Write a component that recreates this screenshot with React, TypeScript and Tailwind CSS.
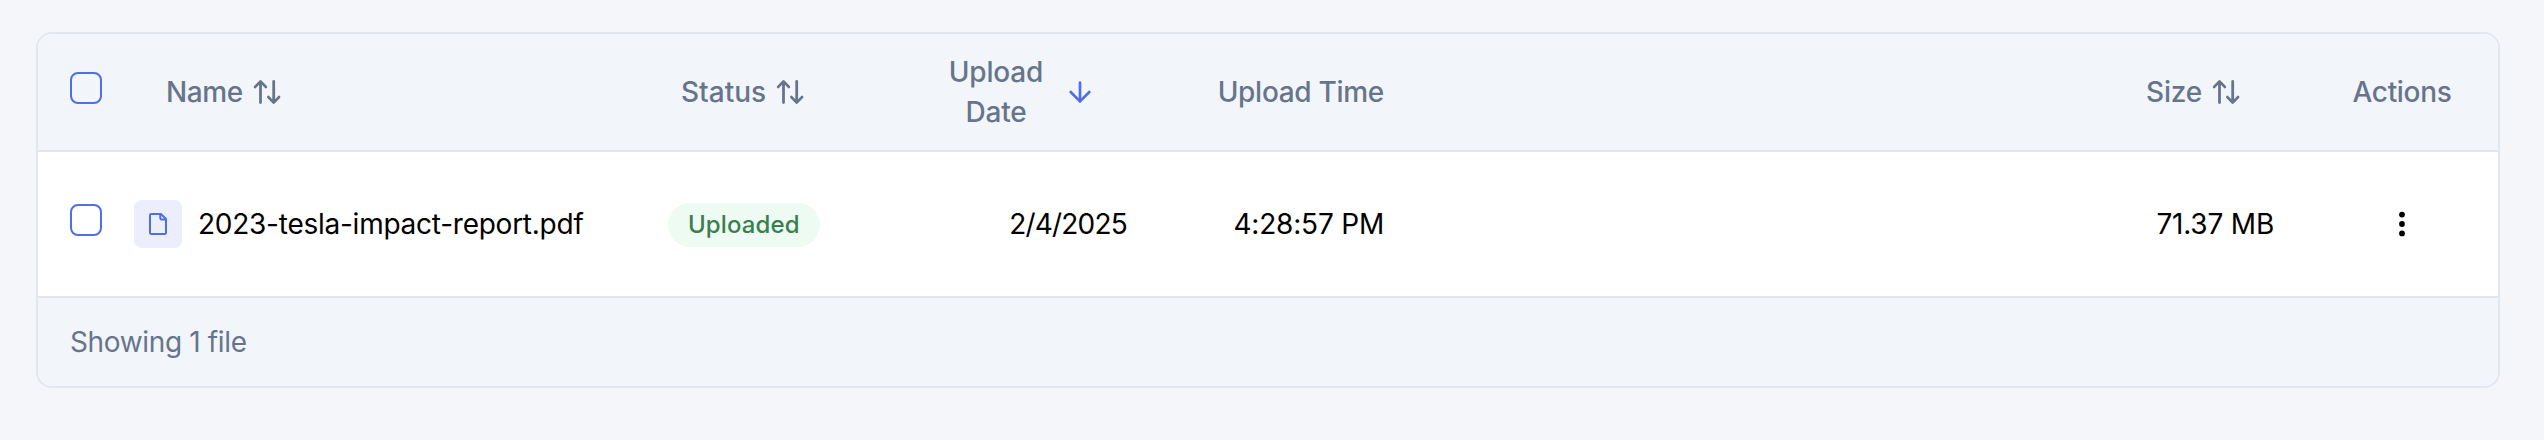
import React from "react";
import { ArrowDown } from "lucide-react";

function Checkbox() {
  return (
    <span
      role="checkbox"
      aria-checked="false"
      className="mb-2 size-8 shrink-0 rounded-lg border-2 border-[#4f6ee8]"
    />
  );
}

function SortIcon() {
  return (
    <svg
      className="h-7 w-8 shrink-0"
      viewBox="0 0 32 28"
      fill="none"
      stroke="currentColor"
      strokeWidth="2.8"
      strokeLinecap="round"
      strokeLinejoin="round"
    >
      <path d="M9.5 24.6V3.6M4.2 8.9l5.3-5.5 5.3 5.5" />
      <path d="M22.7 3.4v21M17.4 19.1l5.3 5.5 5.3-5.5" />
    </svg>
  );
}

function FileIcon() {
  return (
    <svg
      className="size-7"
      viewBox="0 0 28 28"
      fill="none"
      stroke="#4f6ee8"
      strokeWidth="2"
      strokeLinejoin="round"
    >
      <path d="M7.2 4H17L22 9V22.8a1.2 1.2 0 0 1-1.2 1.2H7.2A1.2 1.2 0 0 1 6 22.8V5.2A1.2 1.2 0 0 1 7.2 4Z" />
      <path d="M16.300 4v4.200a1.200 1.200 0 0 0 1.200 1.200H22" />
    </svg>
  );
}

function DotsIcon() {
  return (
    <svg className="h-8 w-8" viewBox="0 0 32 32" fill="#000">
      <circle cx="16" cy="6.600" r="2.900" />
      <circle cx="16" cy="16" r="2.900" />
      <circle cx="16" cy="25.400" r="2.900" />
    </svg>
  );
}

const columns =
  "grid grid-cols-[64px_532px_248px_279px_234px_1fr_217px] items-center pl-8";

export default function App() {
  return (
    <div className="h-[440px] bg-[#f4f6fa] pt-8 pr-11 pl-9 font-['Inter',sans-serif] text-[28px] leading-10">
      <div className="overflow-hidden rounded-2xl border-2 border-[#e2e7ee] bg-white">
        <div className={`${columns} h-[118px] border-b-2 border-[#e2e7ee] bg-[#f2f5fa] font-medium tracking-[-0.2px] text-[#67758c]`}>
          <div className="flex">
            <Checkbox />
          </div>
          <div className="flex items-center gap-2 pl-8">
            <span className="tracking-[-0.4px]">Name</span>
            <SortIcon />
          </div>
          <div className="flex items-center gap-2 pl-[15px]">
            <span className="tracking-normal">Status</span>
            <SortIcon />
          </div>
          <div className="flex items-center gap-4 pl-[30px]">
            <span className="w-[104px] text-center">Upload Date</span>
            <ArrowDown className="size-8 text-[#4f6ee8]" strokeWidth={2} />
          </div>
          <div className="flex justify-end pr-[43px] tracking-[-0.3px] whitespace-nowrap">Upload Time</div>
          <div className="flex items-center justify-end gap-2 pr-[39px]">
            <span>Size</span>
            <SortIcon />
          </div>
          <div className="flex justify-center pl-[25px] tracking-[-0.3px]">Actions</div>
        </div>

        <div className={`${columns} h-[146px] border-b-2 border-[#e2e7ee] text-black`}>
          <div className="flex">
            <Checkbox />
          </div>
          <div className="flex items-center gap-4">
            <span className="flex size-12 items-center justify-center rounded-lg bg-[#ecedfd]">
              <FileIcon />
            </span>
            <span className="tracking-[-0.25px]">2023-tesla-impact-report.pdf</span>
          </div>
          <div className="flex pl-0.5">
            <span className="mt-0.5 rounded-full bg-[#edfbf3] px-5 py-1 text-2xl leading-9 font-medium tracking-[0.1px] text-[#3a7f50]">
              Uploaded
            </span>
          </div>
          <div className="flex justify-end pr-[66px] tracking-[-0.8px]">2/4/2025</div>
          <div className="flex justify-end pr-[43px] tracking-[-0.2px]">4:28:57 PM</div>
          <div className="flex justify-end pr-[7px] tracking-[-0.2px]">71.37 MB</div>
          <div className="flex justify-center pl-6">
            <DotsIcon />
          </div>
        </div>

        <div className="flex h-[88px] items-center bg-[#f2f5fa] px-8 tracking-[-0.35px] text-[#67758c]">
          Showing 1 file
        </div>
      </div>
    </div>
  );
}
